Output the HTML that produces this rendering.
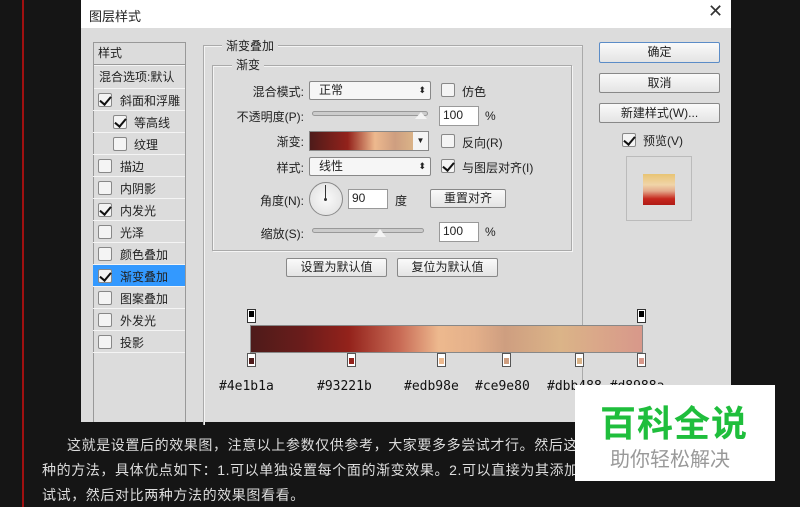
<!DOCTYPE html>
<html><head><meta charset="utf-8"><style>
*{margin:0;padding:0;box-sizing:border-box}
body{width:800px;height:507px;background:#151515;position:relative;overflow:hidden;font-family:"Liberation Sans","Noto Sans CJK SC",sans-serif;font-size:12px;color:#222}
.a{position:absolute}
.red{left:22px;top:0;width:2px;height:507px;background:#a01010}
.dlg{left:81px;top:0;width:650px;height:422px;background:#dcdcdc}
.title{left:81px;top:0;width:650px;height:28px;background:#fff}
.cb{position:absolute;width:14px;height:14px;border:1px solid #888;background:#f4f4f4;border-radius:2px}
.cb.c::after{content:"";position:absolute;left:3px;top:0px;width:5px;height:9px;border:solid #111;border-width:0 2px 2px 0;transform:rotate(40deg)}
.it{position:absolute;left:93px;width:92px;height:22px;border-bottom:1px solid #f4f4f4;font-size:12px}
.it span{position:absolute;left:27px;top:3px}
.btn{position:absolute;border:1px solid #888;background:linear-gradient(#fafafa,#e4e4e4);border-radius:2px;text-align:center;font-size:12px;line-height:17px}
.inp{position:absolute;background:#fff;border:1px solid #999;font-size:12px;padding-left:3px;line-height:17px}
.lbl{position:absolute;font-size:12px;text-align:right}
.stop{position:absolute;width:9px;height:14px}
.hex{position:absolute;top:379px;font-family:"DejaVu Sans Mono","Liberation Mono",monospace;font-size:13px;color:#111}
.txt{position:absolute;color:#ddd;font-size:14px;letter-spacing:0.6px;left:42px;white-space:nowrap}
</style></head><body>
<div class="a red"></div>
<div class="a dlg"></div>
<div class="a title"></div>
<div class="a" style="left:89px;top:6px;font-size:13px">图层样式</div>
<div class="a" style="left:708px;top:1px;font-size:18px;color:#333">✕</div>

<div class="a" style="left:93px;top:42px;width:93px;height:380px;border:1px solid #999;border-bottom:none;background:#dcdcdc"></div>
<div class="a" style="left:98px;top:44px">样式</div>
<div class="a" style="left:94px;top:64px;width:91px;height:2px;border-top:1px solid #999;border-bottom:1px solid #f4f4f4"></div>
<div class="a" style="left:99px;top:68px">混合选项:默认</div>
<div class="a" style="left:94px;top:88px;width:91px;border-top:1px solid #f4f4f4"></div>

<div class="it" style="top:89px"><div class="cb c" style="left:5px;top:4px"></div><span>斜面和浮雕</span></div>
<div class="it" style="top:111px"><div class="cb c" style="left:20px;top:4px"></div><span style="left:41px">等高线</span></div>
<div class="it" style="top:133px"><div class="cb" style="left:20px;top:4px"></div><span style="left:41px">纹理</span></div>
<div class="it" style="top:155px"><div class="cb" style="left:5px;top:4px"></div><span>描边</span></div>
<div class="it" style="top:177px"><div class="cb" style="left:5px;top:4px"></div><span>内阴影</span></div>
<div class="it" style="top:199px"><div class="cb c" style="left:5px;top:4px"></div><span>内发光</span></div>
<div class="it" style="top:221px"><div class="cb" style="left:5px;top:4px"></div><span>光泽</span></div>
<div class="it" style="top:243px"><div class="cb" style="left:5px;top:4px"></div><span>颜色叠加</span></div>
<div class="it" style="top:265px;background:#3399ff"><div class="cb c" style="left:5px;top:4px"></div><span>渐变叠加</span></div>
<div class="it" style="top:287px"><div class="cb" style="left:5px;top:4px"></div><span>图案叠加</span></div>
<div class="it" style="top:309px"><div class="cb" style="left:5px;top:4px"></div><span>外发光</span></div>
<div class="it" style="top:331px"><div class="cb" style="left:5px;top:4px"></div><span>投影</span></div>

<div class="a" style="left:203px;top:45px;width:380px;height:380px;border:1px solid #aaa;border-bottom:none;box-shadow:inset 1px 1px #f4f4f4"></div>
<div class="a" style="left:222px;top:37px;background:#dcdcdc;padding:0 4px">渐变叠加</div>
<div class="a" style="left:212px;top:65px;width:360px;height:186px;border:1px solid #aaa;box-shadow:inset 1px 1px #f4f4f4,1px 1px #f4f4f4"></div>
<div class="a" style="left:232px;top:56px;background:#dcdcdc;padding:0 4px">渐变</div>

<div class="lbl" style="left:220px;width:84px;top:83px">混合模式:</div>
<div class="btn" style="left:309px;top:81px;width:122px;height:19px;text-align:left;padding-left:9px;background:#f6f6f6">正常<span style="position:absolute;right:4px;font-size:9px">⬍</span></div>
<div class="cb" style="left:441px;top:83px"></div><div class="a" style="left:462px;top:83px">仿色</div>

<div class="lbl" style="left:220px;width:84px;top:108px">不透明度(P):</div>
<div class="a" style="left:312px;top:111px;width:116px;height:5px;border:1px solid #999;border-radius:3px;background:#ccc"></div>
<div class="a" style="left:415px;top:112px;width:0;height:0;border-left:6px solid transparent;border-right:6px solid transparent;border-bottom:7px solid #f4f4f4"></div>
<div class="inp" style="left:439px;top:106px;width:40px;height:20px">100</div>
<div class="a" style="left:485px;top:109px">%</div>

<div class="lbl" style="left:220px;width:84px;top:133px">渐变:</div>
<div class="a" style="left:309px;top:131px;width:120px;height:20px;border:1px solid #888;background:linear-gradient(90deg,#4e1b1a,#93221b 32%,#edb98e 55%,#ce9e80 72%,#dbb488 88%,#d8988a)"></div>
<div class="a" style="left:413px;top:132px;width:15px;height:18px;background:#f4f4f4;text-align:center;font-size:8px;line-height:18px">▼</div>
<div class="cb" style="left:441px;top:134px"></div><div class="a" style="left:462px;top:134px">反向(R)</div>

<div class="lbl" style="left:220px;width:84px;top:159px">样式:</div>
<div class="btn" style="left:309px;top:157px;width:122px;height:19px;text-align:left;padding-left:9px;background:#f6f6f6">线性<span style="position:absolute;right:4px;font-size:9px">⬍</span></div>
<div class="cb c" style="left:441px;top:159px"></div><div class="a" style="left:462px;top:159px">与图层对齐(I)</div>

<div class="lbl" style="left:220px;width:84px;top:192px">角度(N):</div>
<div class="a" style="left:309px;top:182px;width:34px;height:34px;border:1px solid #888;border-radius:50%;background:radial-gradient(#fafafa,#ddd)"></div>
<div class="a" style="left:325px;top:185px;width:1px;height:14px;background:#333"></div>
<div class="a" style="left:324px;top:198px;width:3px;height:3px;background:#333;border-radius:50%"></div>
<div class="inp" style="left:348px;top:189px;width:40px;height:20px">90</div>
<div class="a" style="left:395px;top:192px">度</div>
<div class="btn" style="left:430px;top:189px;width:76px;height:19px">重置对齐</div>

<div class="lbl" style="left:220px;width:84px;top:225px">缩放(S):</div>
<div class="a" style="left:312px;top:228px;width:112px;height:5px;border:1px solid #999;border-radius:3px;background:#ccc"></div>
<div class="a" style="left:374px;top:229px;width:0;height:0;border-left:6px solid transparent;border-right:6px solid transparent;border-bottom:8px solid #f4f4f4"></div>
<div class="inp" style="left:439px;top:222px;width:40px;height:20px">100</div>
<div class="a" style="left:485px;top:225px">%</div>

<div class="btn" style="left:286px;top:258px;width:101px;height:19px">设置为默认值</div>
<div class="btn" style="left:397px;top:258px;width:101px;height:19px">复位为默认值</div>

<div class="btn" style="left:599px;top:42px;width:121px;height:21px;line-height:19px;border-color:#5b8cc7">确定</div>
<div class="btn" style="left:599px;top:73px;width:121px;height:20px;line-height:18px">取消</div>
<div class="btn" style="left:599px;top:103px;width:121px;height:20px;line-height:18px">新建样式(W)...</div>
<div class="cb c" style="left:622px;top:133px"></div><div class="a" style="left:643px;top:132px">预览(V)</div>
<div class="a" style="left:626px;top:156px;width:66px;height:65px;border:1px solid #bbb"></div>
<div class="a" style="left:643px;top:174px;width:32px;height:31px;background:linear-gradient(#e8c474,#f0d4a8 35%,#e4a88a 55%,#c6281e 80%,#b01a16)"></div>

<div class="a" style="left:250px;top:325px;width:393px;height:28px;border:1px solid #888;background:linear-gradient(90deg,#4e1b1a,#6a1c1b 13%,#93221b 25%,#c86a55 38%,#edb98e 48%,#e4b08a 57%,#ce9e80 65%,#dbb488 79%,#d8988a)"></div>
<div class="stop" style="left:247px;top:309px;border:1px solid #333;background:#fff"><div style="margin:1px;width:5px;height:6px;background:#000"></div></div>
<div class="stop" style="left:637px;top:309px;border:1px solid #333;background:#fff"><div style="margin:1px;width:5px;height:6px;background:#000"></div></div>
<div class="stop" style="left:247px;top:353px;border:1px solid #555;background:#fff"><div style="margin:4px 1px 0;width:5px;height:6px;background:#4e1b1a"></div></div>
<div class="stop" style="left:347px;top:353px;border:1px solid #555;background:#fff"><div style="margin:4px 1px 0;width:5px;height:6px;background:#93221b"></div></div>
<div class="stop" style="left:437px;top:353px;border:1px solid #555;background:#fff"><div style="margin:4px 1px 0;width:5px;height:6px;background:#edb98e"></div></div>
<div class="stop" style="left:502px;top:353px;border:1px solid #555;background:#fff"><div style="margin:4px 1px 0;width:5px;height:6px;background:#ce9e80"></div></div>
<div class="stop" style="left:575px;top:353px;border:1px solid #555;background:#fff"><div style="margin:4px 1px 0;width:5px;height:6px;background:#dbb488"></div></div>
<div class="stop" style="left:637px;top:353px;border:1px solid #555;background:#fff"><div style="margin:4px 1px 0;width:5px;height:6px;background:#d8988a"></div></div>
<div class="hex" style="left:219px">#4e1b1a</div>
<div class="hex" style="left:317px">#93221b</div>
<div class="hex" style="left:404px">#edb98e</div>
<div class="hex" style="left:475px">#ce9e80</div>
<div class="hex" style="left:547px">#dbb488 #d8988a</div>

<div class="txt" style="top:435px;left:67px">这就是设置后的效果图，注意以上参数仅供参考，大家要多多尝试才行。然后这</div>
<div class="txt" style="top:460px">种的方法，具体优点如下：1.可以单独设置每个面的渐变效果。2.可以直接为其添加</div>
<div class="txt" style="top:485px">试试，然后对比两种方法的效果图看看。</div>

<div class="a" style="left:575px;top:385px;width:200px;height:96px;background:#fff"></div>
<div class="a" style="left:600px;top:402px;font-size:36px;font-weight:bold;color:#1fbe3c;letter-spacing:1px;line-height:44px">百科全说</div>
<div class="a" style="left:610px;top:448px;font-size:20px;color:#999;line-height:24px">助你轻松解决</div>
</body></html>
